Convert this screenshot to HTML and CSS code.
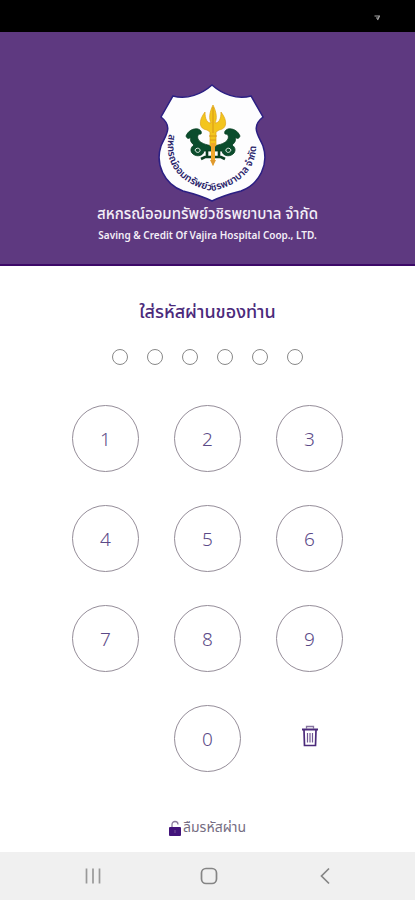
FILE: index.html
```html
<!DOCTYPE html>
<html lang="th">
<head>
<meta charset="utf-8">
<meta name="viewport" content="width=device-width, initial-scale=1">
<title>ใส่รหัสผ่านของท่าน</title>
<link rel="stylesheet" href="styles.css">
</head>
<body>
<div class="status">
  <svg width="8" height="8" viewBox="0 0 8 8" fill="none" stroke="#aaa" stroke-width="1.2"><path d="M1.500 2H7M3 4H5M6.500 2L4.500 6"/></svg>
</div>
<header class="brand">
  <svg class="logo" width="110" height="120" viewBox="0 0 110 120" role="img" aria-label="สหกรณ์ออมทรัพย์วชิรพยาบาล จำกัด">
    <path d="M55 2C45 11 30 17 16 13L4 34C17 44 8 53 4 63C-2 81 7 101 26 108C38 111 47 114 55 118C63 114 72 111 84 108C103 101 112 81 106 63C102 53 93 44 106 34L94 13C80 17 65 11 55 2Z" fill="#fdfdfe" stroke="#2b1f83" stroke-width="1.5"/>
    <g id="serpent">
      <path d="M29 53C31 48 36 45 41 46C44 47 45 49 44 51C41 51 40 53 41 56C43 60 49 62 56 63V68H47C46 74 38 74 35 70C33 67 34 64 37 62C33 59 33 56 34 54C32 56 30 56 29 53Z" fill="#0b4d2d" stroke="#063d20" stroke-width=".8"/>
      <path d="M38 67C39 64 44 65 43 68C42 70 39 70 38 67" fill="none" stroke="#e6efe8" stroke-width="1"/>
    </g>
    <use href="#serpent" transform="matrix(-1 0 0 1 112 0)"/>
    <path d="M50 67V75M62 67V75M44 76L48 74H64L68 76" fill="none" stroke="#0b3f22" stroke-width="2.6"/>
    <path d="M56 22C52 30 52 36 54 40C50 40 48 36 48 29C41 38 42 46 50 47L53 49V63H59V49L62 47C70 46 71 38 64 29C64 36 62 40 58 40C60 36 60 30 56 22Z" fill="#f3c51d" stroke="#dca21b" stroke-width=".7"/>
    <path d="M54 60H58V77L56 83L54 77Z" fill="#efa62b"/>
    <path d="M52 53H60M53 57H59M56 24V50" stroke="#d89819" fill="none"/>
    <path d="M53 77H59L56 83Z" fill="#e09a2e"/>
    <path id="crest-arc" d="M12 51C6 81 22 101 55 108C88 101 104 81 98 49" fill="none"/>
    <text class="crest-text"><textPath href="#crest-arc">สหกรณ์ออมทรัพย์วชิรพยาบาล จำกัด</textPath></text>
  </svg>
  <h1 class="name">สหกรณ์ออมทรัพย์วชิรพยาบาล จำกัด</h1>
  <p class="name-en">Saving &amp; Credit Of Vajira Hospital Coop., LTD.</p>
</header>
<main class="login">
  <h2 class="prompt">ใส่รหัสผ่านของท่าน</h2>
  <div class="dots"><i></i><i></i><i></i><i></i><i></i><i></i></div>
  <div class="keypad">
    <button class="key">1</button><button class="key">2</button><button class="key">3</button>
    <button class="key">4</button><button class="key">5</button><button class="key">6</button>
    <button class="key">7</button><button class="key">8</button><button class="key">9</button>
    <button class="key zero">0</button>
    <button class="delete" aria-label="ลบ">
      <svg width="18" height="22" viewBox="0 0 18 22" fill="none" stroke="#4b2a7b"><path d="M1 4.500H17" stroke-width="2"/><path d="M5.500 4V1.500H12.500V4" stroke="#85739f" stroke-width="1.3"/><path d="M3 5L3.500 20.500H14.500L15 5" stroke-width="1.7"/><path d="M6.500 8V17.500M9 8V17.500M11.500 8V17.500" stroke="#705694" stroke-width="1.2"/></svg>
    </button>
  </div>
  <a class="forgot" href="#">
    <svg width="12" height="16" viewBox="0 0 12 16"><path d="M3 8V4.500C3 .5 9 .5 9 4.500" fill="none" stroke="#8c7d9d" stroke-width="1.3"/><rect y="7" width="12" height="9" rx="1" fill="#43147b"/><path d="M6 10V13" stroke="#765499"/></svg>
    <span>ลืมรหัสผ่าน</span>
  </a>
</main>
<nav class="system">
  <button aria-label="แอปล่าสุด"><svg width="18" height="18" viewBox="0 0 18 18" stroke="#999" stroke-width="1.7"><path d="M2.500 1.500V16.500M9 1.500V16.500M15.500 1.500V16.500"/></svg></button>
  <button aria-label="หน้าหลัก"><svg width="18" height="18" viewBox="0 0 18 18" fill="none" stroke="#858585" stroke-width="1.7"><rect x="1.500" y="1.500" width="15" height="15" rx="4.500"/></svg></button>
  <button aria-label="ย้อนกลับ"><svg width="18" height="18" viewBox="0 0 18 18" fill="none" stroke="#858585" stroke-width="1.7"><path d="M13 1.500L5.500 9L13 16.500"/></svg></button>
</nav>
</body>
</html>
```
FILE: styles.css
```css
* { box-sizing: border-box; }
body {
  margin: 0;
  min-height: 100vh;
  display: flex;
  flex-direction: column;
  background: #fff;
  color: #5b4a87;
  font-family: "Noto Sans Thai", "Noto Sans", "Open Sans", sans-serif;
}
h1, h2, p { margin: 0; }
button { padding: 0; border: 0; background: none; font: inherit; color: inherit; }
svg { display: block; }
.status {
  height: 32px;
  padding: 4px 34px 0 0;
  display: flex;
  justify-content: flex-end;
  align-items: center;
  background: #000;
}
.brand {
  padding: 51px 0 20px;
  display: flex;
  flex-direction: column;
  align-items: center;
  background: #5e3980;
  border-bottom: 2px solid #3d0968;
  color: #f3eef7;
  text-align: center;
}
.logo { margin-left: 8px; }
.crest-text { font-size: 10px; font-weight: 600; fill: #29236a; }
.name { font-size: 15px; line-height: 24px; font-weight: 500; white-space: nowrap; }
.name-en { font-family: "Noto Sans", sans-serif; font-size: 10px; line-height: 17px; font-weight: 600; white-space: nowrap; }
.login {
  flex: 1;
  padding: 35px 0 14px;
  display: flex;
  flex-direction: column;
  align-items: center;
}
.prompt { font-size: 18px; line-height: 24px; font-weight: 500; color: #4b2a7b; }
.dots { display: flex; gap: 19px; margin-top: 24px; }
.dots i { width: 16px; height: 16px; border: 1px solid #888; border-radius: 50%; }
.keypad {
  margin-top: 40px;
  display: grid;
  grid-template-columns: repeat(3, 67px);
  gap: 33px 35px;
}
.key {
  height: 67px;
  border: 1px solid #958d99;
  border-radius: 50%;
  font-family: "Noto Sans", sans-serif;
  font-size: 19px;
  font-weight: 300;
}
.zero { grid-column: 2; }
.delete { display: flex; align-items: center; justify-content: center; padding-bottom: 6px; }
.forgot {
  margin-top: auto;
  display: flex;
  align-items: center;
  gap: 2px;
  color: #756d82;
  font-size: 14px;
  line-height: 20px;
  text-decoration: none;
}
.system {
  height: 48px;
  padding: 0 81px 0 84px;
  display: flex;
  justify-content: space-between;
  align-items: center;
  background: #f0f0f0;
}
```
